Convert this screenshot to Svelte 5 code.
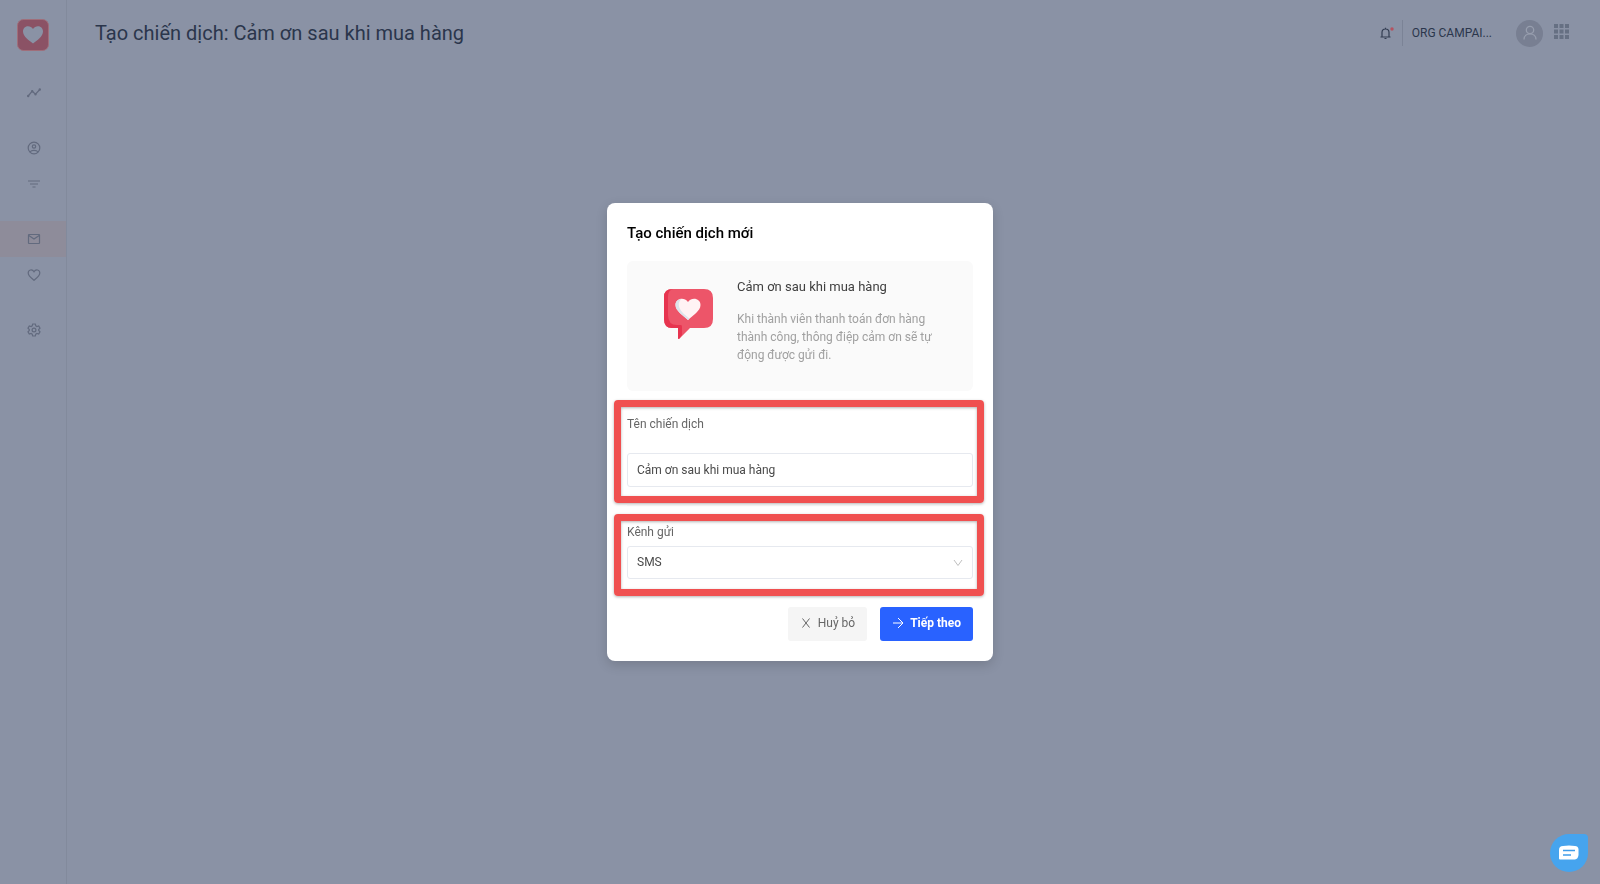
<script lang="ts">
  let name: string = 'Cảm ơn sau khi mua hàng';
  let channel: string = 'sms';
  let showModal: boolean = true;

  const closeModal = () => {
    showModal = false;
  };
</script>

<div class="page">
  <aside class="sidebar">
    <a class="logo" href="#home" aria-label="Trang chủ">
      <svg width="32" height="32" viewBox="0 0 32 32">
        <rect x="0.5" y="0.5" width="31" height="31" rx="6" fill="#8b5265" stroke="#a06e7a" />
        <path d="M16 24.500C12 21.500 6 17.500 6 12.500C6 7 13 5.500 16 10C19 5.500 26 7 26 12.500C26 17.500 20 21.500 16 24.500Z" fill="#8a92a5" />
      </svg>
    </a>
    <nav>
      <div class="group">
        <a href="#stats" aria-label="Thống kê">
          <svg width="14" height="14" viewBox="0 0 14 14">
            <path d="M1.200 10L5.200 5.200L8.500 8.200L12.800 3.500" />
            <circle cx="1.200" cy="10" r="0.600" /><circle cx="5.200" cy="5.200" r="0.600" /><circle cx="8.500" cy="8.200" r="0.600" /><circle cx="12.800" cy="3.500" r="0.600" />
          </svg>
        </a>
      </div>
      <div class="group">
        <a href="#members" aria-label="Thành viên">
          <svg width="14" height="14" viewBox="0 0 14 14">
            <circle cx="7" cy="7" r="5.800" /><circle cx="7" cy="5.500" r="1.700" />
            <path d="M3 11C4.500 8.800 9.500 8.800 11 11" />
          </svg>
        </a>
        <a href="#segments" aria-label="Phân khúc">
          <svg width="14" height="14" viewBox="0 0 14 14"><path d="M1 4H13M3 7H11M5.500 10H8.500" /></svg>
        </a>
      </div>
      <div class="group">
        <a href="#campaigns" class="active" aria-label="Chiến dịch">
          <svg width="14" height="14" viewBox="0 0 14 14">
            <rect x="1.500" y="2.500" width="11" height="9" rx="0.500" /><path d="M1.800 3.500L7 7L12.200 3.500" />
          </svg>
        </a>
        <a href="#loyalty" aria-label="Yêu thích">
          <svg width="14" height="14" viewBox="0 0 14 14">
            <path d="M7 12.300C4 9.700 1.200 7.600 1.200 4.900C1.200 1.600 5.300 0.800 7 3.700C8.700 0.800 12.800 1.600 12.800 4.900C12.800 7.600 10 9.700 7 12.300Z" />
          </svg>
        </a>
      </div>
      <div class="group">
        <a href="#settings" aria-label="Cài đặt">
          <svg width="14" height="14" viewBox="0 0 14 14">
            <path d="M5.700 1H8.300L8.800 2.800L9.900 3.500L11.700 3L13 5.200L11.700 6.500V7.500L13 8.800L11.700 11L9.900 10.500L8.800 11.200L8.300 13H5.700L5.200 11.200L4.100 10.500L2.300 11L1 8.800L2.300 7.500V6.500L1 5.200L2.300 3L4.100 3.500L5.200 2.800Z" />
            <circle cx="7" cy="7" r="1.900" />
          </svg>
        </a>
      </div>
    </nav>
  </aside>

  <header class="header">
    <h1>Tạo chiến dịch: Cảm ơn sau khi mua hàng</h1>
    <div class="tools">
      <button type="button" class="bell" aria-label="Thông báo">
        <svg width="16" height="16" viewBox="0 0 16 16" fill="none" stroke="#333d52" stroke-width="1.200">
          <path d="M2.500 12H12.500M4 12V7.500C4 2.800 11 2.800 11 7.500V12M7.500 4V2.800M6.500 13.500H8.500" />
          <circle cx="14" cy="4" r="1.700" fill="#b5525f" stroke="none" />
        </svg>
      </button>
      <span class="org">ORG CAMPAI...</span>
      <button type="button" class="avatar" aria-label="Tài khoản">
        <svg width="14" height="16" viewBox="0 0 14 16" fill="none" stroke="#979eae" stroke-width="1.300">
          <circle cx="7" cy="5" r="3.700" /><path d="M1 14.500C1 7 13 7 13 14.500" />
        </svg>
      </button>
      <button type="button" class="apps" aria-label="Ứng dụng">
        <svg width="16" height="16" viewBox="0 0 16 16" fill="#667083">
          {#each [0, 5.5, 11] as y}
            {#each [0, 5.5, 11] as x}
              <rect {x} {y} width="4" height="4" />
            {/each}
          {/each}
        </svg>
      </button>
    </div>
  </header>
</div>

{#if showModal}
  <div class="mask">
    <form class="modal" on:submit|preventDefault={closeModal}>
      <h2>Tạo chiến dịch mới</h2>
      <div class="card">
        <svg width="50" height="50" viewBox="0 0 50 50">
          <path d="M8 0H41Q50 0 50 9V30Q50 39 41 39H27L16 50Q15 50 15 49V39H9Q1 39 1 30V8Q1 0 9 0Z" fill="#ed5569" />
          <path d="M10 0Q5 1 5 8V26Q5 36 14 36H18Q19 36 19 38V46L16 50Q15 50 15 49V39H9Q1 39 1 30V8Q1 0 10 0Z" fill="#e7344f" />
          <path d="M25 31C20 26 12.500 22 12.500 16C12.500 9.500 21 7.500 25 13C29 7.500 37.500 9.500 37.500 16C37.500 22 30 26 25 31Z" fill="#fff3f4" />
          <path d="M25 31C20 26 12.500 22 12.500 16C12.500 12 15.500 10 18.500 10C16 12 15 15 16.500 19C18 23 22 26 26.500 29.500Z" fill="#dce4eb" />
        </svg>
        <div class="info">
          <h3>Cảm ơn sau khi mua hàng</h3>
          <p>Khi thành viên thanh toán đơn hàng thành công, thông điệp cảm ơn sẽ tự động được gửi đi.</p>
        </div>
      </div>

      <div class="field name">
        <label for="name">Tên chiến dịch</label>
        <input id="name" type="text" bind:value={name} />
      </div>
      <hr />
      <div class="field channel">
        <label for="channel">Kênh gửi</label>
        <div class="select">
          <select id="channel" bind:value={channel}>
            <option value="sms">SMS</option>
            <option value="email">Email</option>
          </select>
          <svg width="10" height="8" viewBox="0 0 10 8" fill="none" stroke="#bfbfbf"><path d="M1 1L5 6.500L9 1" /></svg>
        </div>
      </div>

      <div class="actions">
        <button type="button" class="cancel" on:click={closeModal}>
          <svg width="12" height="12" viewBox="0 0 12 12"><path d="M2.500 1.500L9.500 10.500M9.500 1.500L2.500 10.500" /></svg>
          Huỷ bỏ
        </button>
        <button type="submit" class="next">
          <svg width="12" height="12" viewBox="0 0 12 12"><path d="M1 6H11M6 1L11 6L6 11" /></svg>
          Tiếp theo
        </button>
      </div>
    </form>
  </div>
{/if}

<button type="button" class="chat" aria-label="Trò chuyện">
  <svg width="20" height="16" viewBox="0 0 20 16">
    <path d="M4 1Q10 0 16 1Q19 1 19.500 4V10Q19 14 16 14.500H1Q0 14.500 0 13.500V5Q0 1 4 1Z" fill="#fff" />
    <path d="M4 5.500H16M4 10H12" stroke="#3f9dea" stroke-width="1.500" />
  </svg>
</button>

<style>
  :global(body) {
    background: #8a92a5;
  }

  * {
    box-sizing: border-box;
    font-family: Roboto, sans-serif;
  }

  h1, h2, h3, p {
    margin: 0;
  }

  button {
    display: flex;
    align-items: center;
    justify-content: center;
    padding: 0;
    border: none;
    background: none;
    cursor: pointer;
  }

  .page {
    display: flex;
    min-height: 100vh;
  }

  .sidebar {
    width: 67px;
    border-right: 1px solid #828a9c;
  }

  .logo {
    display: flex;
    justify-content: center;
    padding: 19px 0 24px;
  }

  nav {
    display: flex;
    flex-direction: column;
    gap: 19px;
  }

  nav a {
    display: flex;
    align-items: center;
    justify-content: center;
    height: 36px;
    padding-left: 2px;
  }

  nav a.active {
    background: #8e8c9a;
  }

  nav svg {
    fill: none;
    stroke: #626a7e;
    stroke-width: 1.2;
  }

  .header {
    flex: 1;
    display: flex;
    align-items: center;
    justify-content: space-between;
    height: 66px;
    padding: 0 30px 0 28px;
  }

  .header h1 {
    color: #2b364c;
    font-size: 20px;
    font-weight: 400;
    line-height: 28px;
  }

  .tools {
    display: flex;
    align-items: center;
  }

  .bell {
    padding-right: 8px;
  }

  .org {
    min-width: 88px;
    padding-left: 9px;
    border-left: 1px solid #7b8396;
    white-space: nowrap;
    color: #2b364c;
    font-size: 12px;
    line-height: 26px;
  }

  .avatar {
    width: 27px;
    height: 27px;
    margin: 0 11px 0 24px;
    border-radius: 50%;
    background: #787f92;
  }

  .apps {
    padding-bottom: 2px;
  }

  .mask {
    position: fixed;
    inset: 0;
    display: grid;
    place-items: center;
    padding-bottom: 20px;
  }

  .modal {
    width: 386px;
    padding: 20px;
    border-radius: 8px;
    background: #fff;
    box-shadow: 0 4px 12px rgba(0, 0, 0, 0.15);
  }

  .modal h2 {
    margin-bottom: 17px;
    color: #000;
    font-size: 15px;
    font-weight: 500;
    line-height: 21px;
  }

  .card {
    display: flex;
    gap: 24px;
    min-height: 130px;
    margin-bottom: 9px;
    padding: 16px 36px;
    border-radius: 6px;
    background: #fafafa;
  }

  .card svg {
    flex: none;
    margin-top: 12px;
  }

  .card h3 {
    margin-bottom: 13px;
    color: #404040;
    font-size: 13px;
    font-weight: 400;
    line-height: 20px;
  }

  .card p {
    color: #a0a0a0;
    font-size: 12px;
    line-height: 18px;
  }

  .field {
    display: flex;
    flex-direction: column;
    margin: 0 -11px 0 -13px;
    padding: 0 4px 0 6px;
    border: 7px solid #f05050;
    border-radius: 4px;
    box-shadow: 0 1px 3px rgba(0, 0, 0, 0.3), inset 0 1px 3px rgba(0, 0, 0, 0.3);
  }

  .field label {
    color: #666;
    font-size: 12px;
    line-height: 18px;
  }

  .field.name {
    gap: 20px;
    padding-top: 8px;
    padding-bottom: 9px;
  }

  .field.channel {
    gap: 5px;
    padding-top: 2px;
    padding-bottom: 10px;
  }

  input, select {
    width: 100%;
    height: 34px;
    padding: 0 9px;
    border: 1px solid #e6e9ef;
    border-radius: 3px;
    background: #fff;
    color: #4a4a4a;
    font-size: 12px;
    appearance: none;
  }

  .select {
    position: relative;
  }

  .select select {
    display: block;
    height: 33px;
    padding-bottom: 2px;
  }

  .select svg {
    position: absolute;
    top: 13px;
    right: 10px;
    pointer-events: none;
  }

  hr {
    height: 1px;
    margin: 2px 0 8px;
    border: none;
    background: #f0f0f0;
  }

  .actions {
    display: flex;
    justify-content: flex-end;
    gap: 13px;
    margin-top: 11px;
  }

  .actions button {
    gap: 6px;
    height: 34px;
    padding: 0 12px 2px;
    border-radius: 3px;
    font-size: 12px;
  }

  .actions svg {
    fill: none;
    stroke: currentColor;
  }

  .actions .cancel {
    background: #f5f5f5;
    color: #666;
  }

  .actions .next {
    background: #2962ff;
    color: #fff;
    font-weight: 700;
  }

  .chat {
    position: fixed;
    right: 12px;
    bottom: 12px;
    width: 38px;
    height: 38px;
    border-radius: 50% 4px 50% 50%;
    background: #46a4ee;
  }
</style>
